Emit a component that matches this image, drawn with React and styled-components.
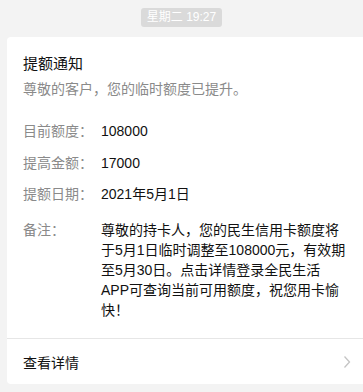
import React from "react";
import styled, { createGlobalStyle } from "styled-components";

const Global = createGlobalStyle`
  html, body { margin: 0; padding: 0; background: #f3f3f3; overflow: hidden; }
  body { font-family: "Liberation Sans", "Noto Sans CJK SC", sans-serif; -webkit-font-smoothing: antialiased; }
`;

const Page = styled.div`
  display: flex;
  flex-direction: column;
  align-items: stretch;
  padding-top: 8px;
`;

const TimeRow = styled.div`
  display: flex;
  justify-content: center;
`;

const TimeBadge = styled.span`
  display: inline-flex;
  align-items: center;
  height: 19px;
  padding: 0 6px;
  border-radius: 3px;
  background: #dadada;
  color: #fff;
  font-size: 12px;
  line-height: 19px;
  white-space: nowrap;
`;

const Card = styled.div`
  margin: 10px 0 0 7px;
  background: #fff;
  border-radius: 4px 0 0 4px;
  display: flex;
  flex-direction: column;
`;

const Body = styled.div`
  padding: 16px 16px 18px 16px;
  display: flex;
  flex-direction: column;
`;

const Title = styled.div`
  font-size: 15px;
  line-height: 22px;
  color: #111;
`;

const Subtitle = styled.div`
  margin-top: 3px;
  font-size: 14px;
  line-height: 22px;
  color: #8a8a8a;
`;

const Fields = styled.div`
  margin-top: 20px;
  display: flex;
  flex-direction: column;
`;

const Field = styled.div`
  display: flex;
  align-items: flex-start;
  font-size: 14px;
  line-height: ${(p) => (p.$multi ? "20px" : "22px")};
  margin-top: ${(p) => p.$gap || 0}px;
`;

const Label = styled.div`
  flex: 0 0 78px;
  color: #8a8a8a;
  white-space: nowrap;
`;

const Value = styled.div`
  flex: 1;
  min-width: 0;
  color: #111;
`;

const Divider = styled.div`
  height: 1px;
  background: #e6e6e6;
`;

const Footer = styled.div`
  display: flex;
  align-items: center;
  justify-content: space-between;
  height: 45px;
  padding: 0 12px 0 16px;
  font-size: 14px;
  color: #111;
`;

const Chevron = () => (
  <svg width="8" height="14" viewBox="0 0 8 14">
    <polyline points="1.5,1.5 6.5,7 1.5,12.5" fill="none" stroke="#c4c4c4" strokeWidth="1.3" />
  </svg>
);

const fields = [
  { label: "目前额度：", value: "108000" },
  { label: "提高金额：", value: "17000", gap: 9.5 },
  { label: "提额日期：", value: "2021年5月1日", gap: 9.5 },
];

export default function App() {
  return (
    <Page>
      <Global />
      <TimeRow>
        <TimeBadge>星期二 19:27</TimeBadge>
      </TimeRow>
      <Card>
        <Body>
          <Title>提额通知</Title>
          <Subtitle>尊敬的客户，您的临时额度已提升。</Subtitle>
          <Fields>
            {fields.map((f) => (
              <Field key={f.label} $gap={f.gap}>
                <Label>{f.label}</Label>
                <Value>{f.value}</Value>
              </Field>
            ))}
            <Field $multi $gap={15}>
              <Label>备注：</Label>
              <Value>
                尊敬的持卡人，您的民生信用卡额度将于5月1日临时调整至108000元，有效期至5月30日。点击详情登录全民生活APP可查询当前可用额度，祝您用卡愉快！
              </Value>
            </Field>
          </Fields>
        </Body>
        <Divider />
        <Footer>
          <span>查看详情</span>
          <Chevron />
        </Footer>
      </Card>
    </Page>
  );
}
